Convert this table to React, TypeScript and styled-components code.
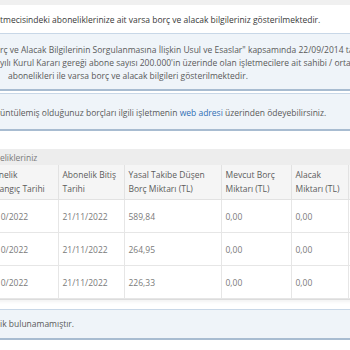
import React from 'react';
import styled, { createGlobalStyle } from 'styled-components';

const GlobalStyle = createGlobalStyle`
  html, body {
    margin: 0;
    padding: 0;
    background: #fff;
    overflow: hidden;
  }
  body {
    font-family: "Open Sans", "Liberation Sans", sans-serif;
    font-size: 8.5px;
    color: #555;
  }
`;

// the screenshot is a crop of a wider page, so the page starts left of the viewport
const Page = styled.div`
  width: 760px;
  margin-left: -21px;
  display: flex;
  flex-direction: column;
`;

const TopStrip = styled.div`
  height: 5px;
  background: #f0f0f0;
`;

const Intro = styled.div`
  height: 28px;
  display: flex;
  align-items: center;
  padding-left: 21px;
  color: #3a3a3a;
  white-space: nowrap;
`;

const Alert = styled.div<{ $top: number; $bottom: number; $gap?: number }>`
  margin-top: ${(p) => p.$gap ?? 0}px;
  padding: ${(p) => p.$top}px 0 ${(p) => p.$bottom}px 21px;
  background: #eff4f9;
  border-top: 1px solid #c8d7e7;
  border-bottom: 2px solid #a8bcd1;
  border-radius: 3px;
  color: #5a5a5a;
  line-height: 13px;
`;

const Line = styled.div<{ $indent?: number }>`
  white-space: nowrap;
  padding-left: ${(p) => p.$indent ?? 0}px;
`;

// text that falls left of the viewport: zero width, overflows to the left
const Cut = styled.span`
  display: inline-flex;
  width: 0;
  justify-content: flex-end;
  white-space: pre;
`;

const Link = styled.a`
  color: #2f6fb5;
  text-decoration: none;
`;

const Panel = styled.div`
  margin-top: 18px;
  border-bottom: 1px solid #dcdcdc;
  box-shadow: 0 2px 3px rgba(0, 0, 0, 0.05);
`;

const PanelHeading = styled.div`
  height: 16px;
  display: flex;
  align-items: center;
  background: #ededed;
  color: #7a7a7a;
  white-space: nowrap;
`;

const Table = styled.table<{ $width: number }>`
  border-collapse: collapse;
  table-layout: fixed;
  width: ${(p) => p.$width}px;
`;

const Th = styled.th`
  padding: 3px 4px;
  text-align: left;
  vertical-align: top;
  font-weight: 400;
  line-height: 14px;
  color: #5c5c5c;
  background: #f5f5f5;
  border-right: 1px solid #e2e2e2;
  border-bottom: 1px solid #e2e2e2;
  white-space: nowrap;
`;

const Td = styled.td`
  height: 32px;
  padding: 0 4px;
  color: #7a7a7a;
  background: #fff;
  border-right: 1px solid #e6e6e6;
  border-bottom: 1px solid #e6e6e6;
  white-space: nowrap;
`;

const columns: { width: number; title: string[] }[] = [
  { width: 79, title: ['Abonelik', 'Başlangıç Tarihi'] },
  { width: 66, title: ['Abonelik Bitiş', 'Tarihi'] },
  { width: 97, title: ['Yasal Takibe Düşen', 'Borç Miktarı (TL)'] },
  { width: 70, title: ['Mevcut Borç', 'Miktarı (TL)'] },
  { width: 57, title: ['Alacak', 'Miktarı (TL)'] },
  { width: 120, title: ['İşlem', ''] },
];

const tableWidth = columns.reduce((sum, c) => sum + c.width, 0);

const rows = [
  ['21/10/2022', '21/11/2022', '589,84', '0,00', '0,00', ''],
  ['21/10/2022', '21/11/2022', '264,95', '0,00', '0,00', ''],
  ['21/10/2022', '21/11/2022', '226,33', '0,00', '0,00', ''],
];

export default function App() {
  return (
    <>
      <GlobalStyle />
      <Page>
        <TopStrip />
        <Intro>
          <Cut>Seçtiğiniz işle</Cut>
          tmecisindeki aboneliklerinize ait varsa borç ve alacak bilgileriniz gösterilmektedir.
        </Intro>
        <Alert $top={9} $bottom={7}>
          <Line>
            <Cut>"Elektronik Haberleşme Sektöründe Abonelerin Bo</Cut>
            rç ve Alacak Bilgilerinin Sorgulanmasına İlişkin Usul ve Esaslar" kapsamında 22/09/2014 tarihli ve
          </Line>
          <Line>
            <Cut>2014/DK-TED/330 sa</Cut>
            yılı Kurul Kararı gereği abone sayısı 200.000'in üzerinde olan işletmecilere ait sahibi / ortağı olduğunuz
          </Line>
          <Line $indent={8}>abonelikleri ile varsa borç ve alacak bilgileri gösterilmektedir.</Line>
        </Alert>
        <Alert $top={12} $bottom={10} $gap={2}>
          <Line>
            <Cut>Gör</Cut>
            üntülemiş olduğunuz borçları ilgili işletmenin <Link href="#">web adresi</Link> üzerinden
            ödeyebilirsiniz.
          </Line>
        </Alert>
        <Panel>
          <PanelHeading>Abonelikleriniz</PanelHeading>
          <Table $width={tableWidth}>
            <colgroup>
              {columns.map((c, i) => (
                <col key={i} style={{ width: c.width }} />
              ))}
            </colgroup>
            <thead>
              <tr>
                {columns.map((c, i) => (
                  <Th key={i}>
                    {c.title[0]}
                    <br />
                    {c.title[1]}
                  </Th>
                ))}
              </tr>
            </thead>
            <tbody>
              {rows.map((r, i) => (
                <tr key={i}>
                  {r.map((v, j) => (
                    <Td key={j}>{v}</Td>
                  ))}
                </tr>
              ))}
            </tbody>
          </Table>
        </Panel>
        <Alert $top={7} $bottom={8} $gap={9}>
          <Line>
            <Cut>Herhangi bir abonel</Cut>
            ik bulunamamıştır.
          </Line>
        </Alert>
      </Page>
    </>
  );
}
